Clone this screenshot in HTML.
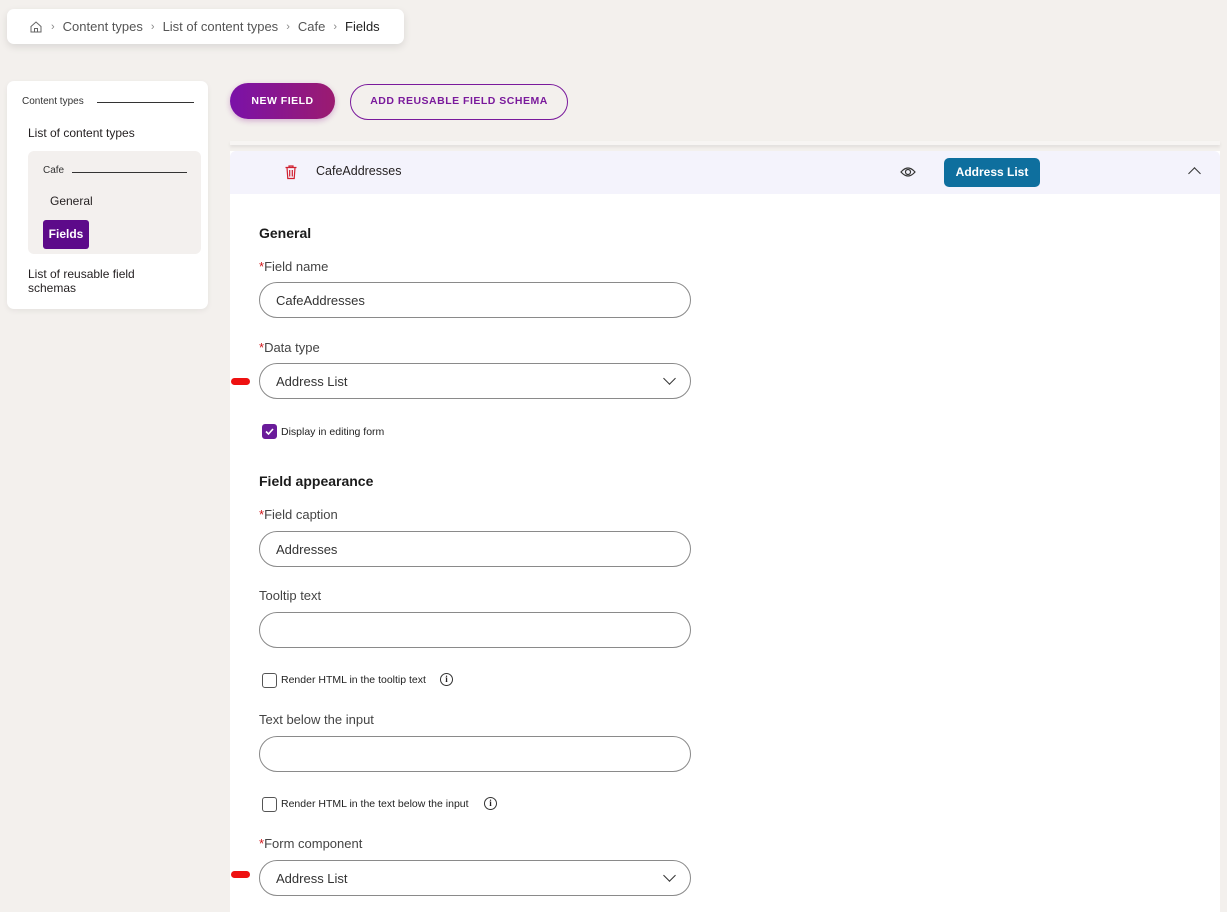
<!DOCTYPE html>
<html><head><meta charset="utf-8"><style>
*{box-sizing:border-box;margin:0;padding:0}
body{width:1227px;height:912px;overflow:hidden;background:#f3f0ed;font-family:"Liberation Sans",sans-serif;color:#231f20;position:relative}
.a{position:absolute}
.bc{left:7px;top:9px;width:397px;height:35px;background:#fff;border-radius:7px;box-shadow:0 3px 8px rgba(0,0,0,.1);font-size:13px;color:#555;display:flex;align-items:center;padding-left:22px;gap:0}
.bc span{margin-right:8px}
.bc .s{color:#888;font-size:11px}
.side{left:7px;top:81px;width:201px;height:228px;background:#fff;border-radius:7px;box-shadow:0 2px 6px rgba(0,0,0,.06)}
.lbl{font-size:13px;color:#444}
.inp{position:absolute;left:259px;width:432px;height:36px;border:1px solid #8a8a8a;border-radius:18px;font-size:13px;color:#333;padding:10px 16px;background:#fff}
.chev{position:absolute;right:16px;top:10px;width:9px;height:9px;border-right:1.3px solid #333;border-bottom:1.3px solid #333;transform:rotate(45deg)}
.cb{position:absolute;left:262px;width:15px;height:15px;border:1px solid #555;border-radius:3px;background:#fff}
.cbt{position:absolute;left:281px;font-size:10.5px;color:#222}
.info{position:absolute;width:13px;height:13px;border:1px solid #333;border-radius:50%;font-size:9px;text-align:center;line-height:11px;font-weight:bold;font-family:"Liberation Serif",serif}
.h{position:absolute;left:259px;font-size:14px;font-weight:bold;color:#1b1b1b}
.st{color:#d0161a}
.red{position:absolute;left:231px;width:19px;height:7px;background:#e11;border-radius:4px}
</style></head><body>
<div class="a bc"><svg width="14" height="14" viewBox="0 0 14 14" style="margin-right:8px"><path d="M2 6.5L7 2l5 4.5V12H2z M5.5 12V8.5h3V12" fill="none" stroke="#666" stroke-width="1"/></svg><span class="s">›</span><span>Content types</span><span class="s">›</span><span>List of content types</span><span class="s">›</span><span>Cafe</span><span class="s">›</span><span style="color:#222">Fields</span></div>

<div class="a side">
<div class="a" style="left:15px;top:15px;font-size:10px;color:#333">Content types</div>
<div class="a" style="left:90px;top:21px;width:97px;height:1px;background:#333"></div>
<div class="a" style="left:21px;top:45px;font-size:12px">List of content types</div>
<div class="a" style="left:21px;top:70px;width:173px;height:103px;background:#f3f0ee;border-radius:6px"></div>
<div class="a" style="left:36px;top:84px;font-size:10px;color:#333">Cafe</div>
<div class="a" style="left:65px;top:91px;width:115px;height:1px;background:#333"></div>
<div class="a" style="left:43px;top:113px;font-size:12px">General</div>
<div class="a" style="left:36px;top:139px;width:46px;height:29px;background:#5d0a8a;border-radius:3px;color:#fff;font-size:12px;font-weight:bold;text-align:center;line-height:29px">Fields</div>
<div class="a" style="left:21px;top:186px;font-size:12px;line-height:14px">List of reusable field<br>schemas</div>
</div>

<div class="a" style="left:230px;top:83px;width:105px;height:36px;border-radius:18px;background:linear-gradient(90deg,#7a12a8,#9b1b70);color:#fff;font-size:10.5px;font-weight:bold;text-align:center;line-height:36px;letter-spacing:.5px;box-shadow:0 2px 6px rgba(140,20,140,.3)">NEW FIELD</div>
<div class="a" style="left:350px;top:84px;width:218px;height:36px;border-radius:18px;border:1.3px solid #7a1a9c;color:#7a1a9c;font-size:10.5px;font-weight:bold;text-align:center;line-height:33px;letter-spacing:.5px">ADD REUSABLE FIELD SCHEMA</div>
<div class="a" style="left:230px;top:141px;width:990px;height:4px;background:#f7f5f3;box-shadow:0 2px 3px rgba(0,0,0,.08)"></div>

<div class="a" style="left:230px;top:151px;width:990px;height:761px;background:#fff"></div>
<div class="a" style="left:230px;top:151px;width:990px;height:43px;background:#f4f3fc;border-radius:6px 6px 0 0"></div>
<svg class="a" style="left:284px;top:164px" width="14" height="16" viewBox="0 0 14 16"><path d="M1.5 3.5h11M5 3.5V2h4v1.5M3 3.5l.8 11h6.4l.8-11M5.7 6v6.5M8.3 6v6.5" fill="none" stroke="#d02030" stroke-width="1.2"/></svg>
<div class="a" style="left:316px;top:164px;font-size:12.5px">CafeAddresses</div>
<svg class="a" style="left:900px;top:165px" width="16" height="14" viewBox="0 0 16 14"><path d="M1 7Q8 -1 15 7Q8 15 1 7z" fill="none" stroke="#333" stroke-width="1.2"/><circle cx="8" cy="7" r="2.5" fill="none" stroke="#333" stroke-width="1.2"/></svg>
<div class="a" style="left:944px;top:158px;width:96px;height:29px;background:#0e6f9e;border-radius:5px;color:#fff;font-size:12px;font-weight:bold;text-align:center;line-height:29px">Address List</div>
<div class="a" style="left:1190px;top:169px;width:9px;height:9px;border-left:1.3px solid #333;border-top:1.3px solid #333;transform:rotate(45deg)"></div>

<div class="h" style="top:225px">General</div>
<div class="a lbl" style="left:259px;top:259px"><span class="st">*</span>Field name</div>
<div class="inp" style="top:282px">CafeAddresses</div>
<div class="a lbl" style="left:259px;top:340px"><span class="st">*</span>Data type</div>
<div class="red" style="top:378px"></div>
<div class="inp" style="top:363px">Address List<div class="chev"></div></div>
<div class="cb" style="top:424px;background:#6a1b9a;border-color:#6a1b9a"><svg width="13" height="13" viewBox="0 0 13 13"><path d="M3 6.5l2.5 2.5 4.5-5" fill="none" stroke="#fff" stroke-width="1.6"/></svg></div>
<div class="cbt" style="top:426px">Display in editing form</div>

<div class="h" style="top:473px">Field appearance</div>
<div class="a lbl" style="left:259px;top:507px"><span class="st">*</span>Field caption</div>
<div class="inp" style="top:531px">Addresses</div>
<div class="a lbl" style="left:259px;top:588px">Tooltip text</div>
<div class="inp" style="top:612px"></div>
<div class="cb" style="top:673px"></div>
<div class="cbt" style="top:674px">Render HTML in the tooltip text</div>
<div class="info" style="left:440px;top:673px">i</div>
<div class="a lbl" style="left:259px;top:712px">Text below the input</div>
<div class="inp" style="top:736px"></div>
<div class="cb" style="top:797px"></div>
<div class="cbt" style="top:798px">Render HTML in the text below the input</div>
<div class="info" style="left:484px;top:797px">i</div>
<div class="a lbl" style="left:259px;top:836px"><span class="st">*</span>Form component</div>
<div class="red" style="top:871px"></div>
<div class="inp" style="top:860px">Address List<div class="chev"></div></div>
</body></html>
